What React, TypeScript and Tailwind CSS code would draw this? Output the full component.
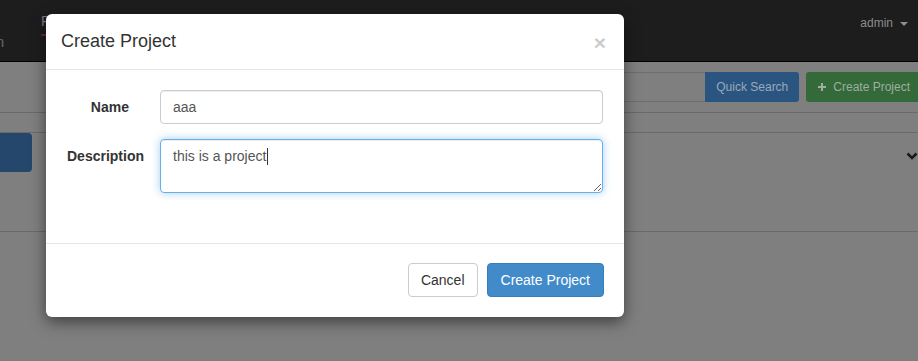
export default function App() {
  return (
    <div className="relative h-[361px] w-[918px] overflow-hidden bg-[#7f7f7f] font-['Liberation_Sans',Arial,sans-serif] text-[14px] text-[#333]">
      {/* dimmed page behind the modal */}
      <div className="flex h-[62px] items-start border-b border-black bg-[#1d1d1d]">
        <div className="ml-[-24px] mt-[34px] text-[14px] leading-[16px] text-[#6b6b6b]">Plan</div>
        <div className="ml-[37px] mt-[13px] border-b-2 border-[#6e2a2a] pb-[5px] text-[14px] leading-[16px] text-[#7b7b8a]">
          Projects
        </div>
        <div className="ml-auto mr-[10px] mt-[16px] flex items-center gap-[7px] text-[12px] leading-[14px] text-[#8c8c8c]">
          admin
          <span className="mt-[2px] h-0 w-0 border-x-[4px] border-t-[4px] border-x-transparent border-t-[#8c8c8c]" />
        </div>
      </div>

      <div className="flex justify-end border-b border-[#6a6a6a] pb-[10px] pt-[10px]">
        <div className="flex h-[30px]">
          <div className="h-[30px] w-[300px] border-b border-t border-[#6e6e6e]" />
          <button className="h-[30px] rounded-r-[3px] bg-[#2b5581] px-[11px] text-[12px] text-[#9aa9b9]">Quick Search</button>
        </div>
        <button className="ml-[7px] mr-[-4px] flex h-[30px] items-center gap-[7px] rounded-[3px] bg-[#34693a] px-[12px] text-[12px] text-[#9fae9f]">
          <svg width="8" height="8" viewBox="0 0 8 8">
            <path d="M3 0h2v3h3v2H5v3H3V5H0V3h3z" fill="#9fae9f" />
          </svg>
          Create Project
        </button>
      </div>

      <div className="h-[20px] border-b border-[#6a6a6a]" />

      <div className="relative h-[99px] border-b border-[#6a6a6a]">
        <div className="h-[39px] w-[32px] rounded-r-[4px] bg-[#24476b]" />
        <svg className="absolute right-0 top-[19px]" width="12" height="9" viewBox="0 0 12 9">
          <path d="M1.5 1.5 L6 6 L10.5 1.5" fill="none" stroke="#1a1a1a" strokeWidth="2.6" />
        </svg>
      </div>

      {/* modal */}
      <div className="absolute left-[46px] top-[14px] w-[578px] rounded-[6px] bg-white shadow-[0_5px_15px_rgba(0,0,0,0.5)]">
        <div className="flex items-start border-b border-[#e5e5e5] p-[15px]">
          <h4 className="text-[18px] leading-[25px] text-[#333]">Create Project</h4>
          <span className="ml-auto mr-[3px] mt-[3px] text-[21px] font-bold leading-[21px] text-[#cccccc]">×</span>
        </div>

        <div className="grid grid-cols-[62px_443px] gap-x-[31px] gap-y-[15px] pb-[50px] pl-[21px] pt-[20px]">
          <label className="pt-[7px] text-right font-bold leading-[20px]">Name</label>
          <input
            className="h-[34px] rounded-[4px] border border-[#ccc] px-[12px] text-[14px] text-[#555] shadow-[inset_0_1px_1px_rgba(0,0,0,0.075)] outline-none"
            defaultValue="aaa"
          />
          <label className="pt-[7px] text-right font-bold leading-[20px]">Description</label>
          <div className="relative">
            <textarea
              className="block h-[54px] w-full rounded-[4px] border border-[#66afe9] px-[12px] py-[6px] text-[14px] leading-[20px] text-[#555] shadow-[inset_0_1px_1px_rgba(0,0,0,0.075),0_0_8px_rgba(102,175,233,0.6)] outline-none"
              defaultValue="this is a project"
            />
            <span className="absolute left-[107px] top-[9px] h-[17px] w-px bg-[#333]" />
          </div>
        </div>

        <div className="flex justify-end border-t border-[#e5e5e5] px-[20px] pb-[20px] pt-[19px]">
          <button className="h-[34px] rounded-[4px] border border-[#ccc] bg-white px-[12px] text-[14px] text-[#333]">Cancel</button>
          <button className="ml-[9px] h-[34px] rounded-[4px] border border-[#357ebd] bg-[#428bca] px-[13px] text-[14px] text-white">
            Create Project
          </button>
        </div>
      </div>
    </div>
  );
}
